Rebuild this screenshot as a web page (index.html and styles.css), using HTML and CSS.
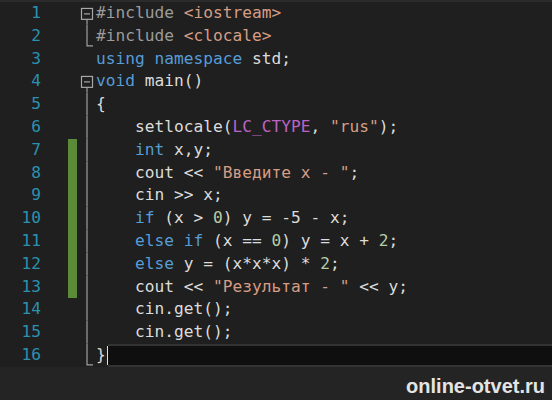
FILE: index.html
```html
<!DOCTYPE html>
<html>
<head>
<meta charset="utf-8">
<link rel="stylesheet" href="styles.css">
</head>
<body>
<div class="editor">
  <div class="row"><span class="num">1</span><span class="chg"></span><span class="fold"><svg viewBox="0 0 19 23" preserveAspectRatio="none"><rect x="4.5" y="6.5" width="11" height="11" class="fb"/><line x1="7" y1="12" x2="13" y2="12" class="fb"/><line x1="10" y1="17.5" x2="10" y2="23" class="fl"/></svg></span><span class="code"><span class="pp">#include</span> <span class="str">&lt;iostream&gt;</span></span></div>
  <div class="row"><span class="num">2</span><span class="chg"></span><span class="fold"><svg viewBox="0 0 19 23" preserveAspectRatio="none"><polyline points="10,0 10,21 16,21" class="fl"/></svg></span><span class="code"><span class="pp">#include</span> <span class="str">&lt;clocale&gt;</span></span></div>
  <div class="row"><span class="num">3</span><span class="chg"></span><span class="fold"></span><span class="code"><span class="kw">using</span> <span class="kw">namespace</span> std;</span></div>
  <div class="row"><span class="num">4</span><span class="chg"></span><span class="fold"><svg viewBox="0 0 19 23" preserveAspectRatio="none"><rect x="4.5" y="6.5" width="11" height="11" class="fb"/><line x1="7" y1="12" x2="13" y2="12" class="fb"/><line x1="10" y1="17.5" x2="10" y2="23" class="fl"/></svg></span><span class="code"><span class="kw">void</span> main()</span></div>
  <div class="row"><span class="num">5</span><span class="chg"></span><span class="fold"><svg viewBox="0 0 19 23" preserveAspectRatio="none"><line x1="10" y1="0" x2="10" y2="23" class="fl"/></svg></span><span class="code">{</span></div>
  <div class="row"><span class="num">6</span><span class="chg"></span><span class="fold"><svg viewBox="0 0 19 23" preserveAspectRatio="none"><line x1="10" y1="0" x2="10" y2="23" class="fl"/></svg></span><span class="code">    setlocale(<span class="mac">LC_CTYPE</span>, <span class="str">"rus"</span>);</span></div>
  <div class="row"><span class="num">7</span><span class="chg on"></span><span class="fold"><svg viewBox="0 0 19 23" preserveAspectRatio="none"><line x1="10" y1="0" x2="10" y2="23" class="fl"/></svg></span><span class="code">    <span class="kw">int</span> x,y;</span></div>
  <div class="row"><span class="num">8</span><span class="chg on"></span><span class="fold"><svg viewBox="0 0 19 23" preserveAspectRatio="none"><line x1="10" y1="0" x2="10" y2="23" class="fl"/></svg></span><span class="code">    cout &lt;&lt; <span class="str">"Введите x - "</span>;</span></div>
  <div class="row"><span class="num">9</span><span class="chg on"></span><span class="fold"><svg viewBox="0 0 19 23" preserveAspectRatio="none"><line x1="10" y1="0" x2="10" y2="23" class="fl"/></svg></span><span class="code">    cin &gt;&gt; x;</span></div>
  <div class="row"><span class="num">10</span><span class="chg on"></span><span class="fold"><svg viewBox="0 0 19 23" preserveAspectRatio="none"><line x1="10" y1="0" x2="10" y2="23" class="fl"/></svg></span><span class="code">    <span class="kw">if</span> (x &gt; <span class="n">0</span>) y = -5 - x;</span></div>
  <div class="row"><span class="num">11</span><span class="chg on"></span><span class="fold"><svg viewBox="0 0 19 23" preserveAspectRatio="none"><line x1="10" y1="0" x2="10" y2="23" class="fl"/></svg></span><span class="code">    <span class="kw">else</span> <span class="kw">if</span> (x == <span class="n">0</span>) y = x + <span class="n">2</span>;</span></div>
  <div class="row"><span class="num">12</span><span class="chg on"></span><span class="fold"><svg viewBox="0 0 19 23" preserveAspectRatio="none"><line x1="10" y1="0" x2="10" y2="23" class="fl"/></svg></span><span class="code">    <span class="kw">else</span> y = (x*x*x) * <span class="n">2</span>;</span></div>
  <div class="row"><span class="num">13</span><span class="chg on"></span><span class="fold"><svg viewBox="0 0 19 23" preserveAspectRatio="none"><line x1="10" y1="0" x2="10" y2="23" class="fl"/></svg></span><span class="code">    cout &lt;&lt; <span class="str">"Результат - "</span> &lt;&lt; y;</span></div>
  <div class="row"><span class="num">14</span><span class="chg"></span><span class="fold"><svg viewBox="0 0 19 23" preserveAspectRatio="none"><line x1="10" y1="0" x2="10" y2="23" class="fl"/></svg></span><span class="code">    cin.get();</span></div>
  <div class="row"><span class="num">15</span><span class="chg"></span><span class="fold"><svg viewBox="0 0 19 23" preserveAspectRatio="none"><line x1="10" y1="0" x2="10" y2="23" class="fl"/></svg></span><span class="code">    cin.get();</span></div>
  <div class="row"><span class="num">16</span><span class="chg"></span><span class="fold"><svg viewBox="0 0 19 23" preserveAspectRatio="none"><polyline points="10,0 10,21 16,21" class="fl"/></svg></span><span class="cur"><span class="brace">}</span><span class="caret"></span><span class="hl"></span></span></div>
</div>
<div class="footer"><span class="mark">online-otvet.ru</span></div>
</body>
</html>
```

FILE: styles.css
```css
html, body {
  margin: 0;
  padding: 0;
}
body {
  width: 552px;
  height: 400px;
  overflow: hidden;
  background: #1f1f1f;
  border-top: 2px solid #2b2b2b;
  box-sizing: border-box;
  font-family: "DejaVu Sans Mono", "Liberation Mono", monospace;
  font-size: 16.2px;
  color: #dcdcdc;
}
.editor {
  display: flex;
  flex-direction: column;
}
.row {
  display: flex;
  height: 22.8px;
  line-height: 22.8px;
}
.num {
  width: 41px;
  text-align: right;
  color: #2b91af;
  flex: none;
}
.chg {
  width: 9px;
  margin-left: 27px;
  flex: none;
}
.chg.on {
  background: #5b8a38;
}
.fold {
  width: 19px;
  flex: none;
  display: flex;
}
.fold svg {
  width: 19px;
  height: 100%;
  display: block;
}
.fb {
  fill: none;
  stroke: #a8a8a8;
  stroke-width: 1.2;
}
.fl {
  fill: none;
  stroke: #a0a0a0;
  stroke-width: 1.2;
}
.code {
  display: block;
  white-space: pre;
  flex: 1;
}
.pp { color: #9b9b9b; }
.str { color: #d69d85; }
.kw { color: #569cd6; }
.mac { color: #bd63c5; }
.n { color: #b5cea8; }
.cur {
  flex: 1;
  display: flex;
  align-items: stretch;
}
.caret {
  width: 1.5px;
  background: #e0e0e0;
  margin: 2px 0 2px 1px;
}
.hl {
  flex: 1;
  background: #0f0f0f;
  border-top: 2px solid #333333;
  border-bottom: 2px solid #333333;
  box-sizing: border-box;
}
.footer {
  height: 33px;
  background: #242424;
  display: flex;
  justify-content: flex-end;
  padding: 8px 7px 0 0;
  box-sizing: border-box;
}
.mark {
  font-family: "Liberation Sans", Arial, sans-serif;
  font-weight: bold;
  font-size: 20px;
  line-height: 23px;
  color: #e4e4e4;
}
```
